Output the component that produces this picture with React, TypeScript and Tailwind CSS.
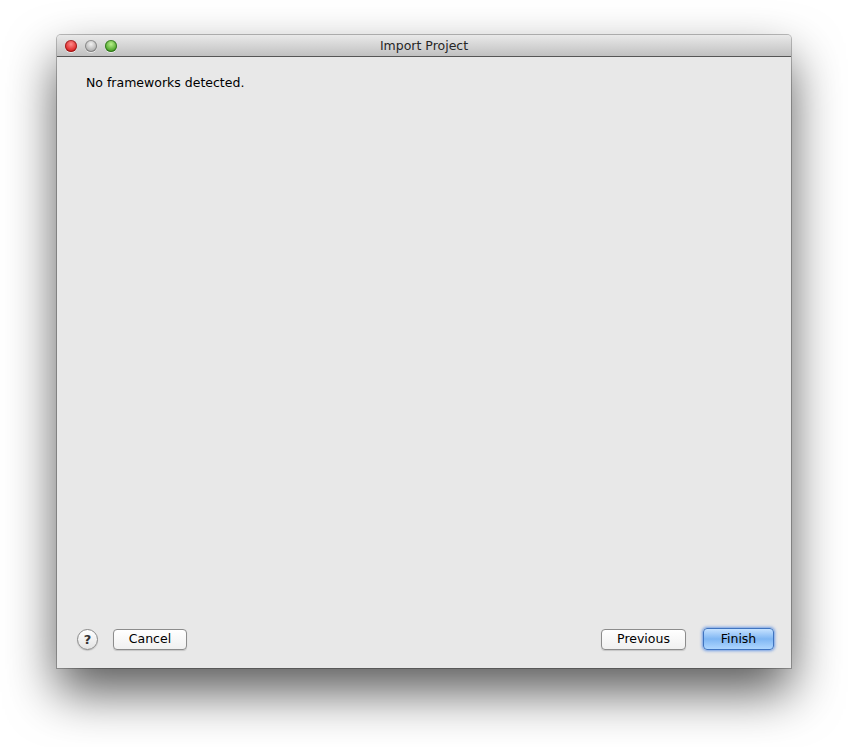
import React from "react";

function Light({ from, to, border }: { from: string; to: string; border: string }) {
  return (
    <div
      className="w-[12px] h-[12px] rounded-full"
      style={{
        background: `radial-gradient(circle at 50% 35%, ${from} 0%, ${to} 75%)`,
        boxShadow: `inset 0 0 0 1px ${border}, 0 1px 0 rgba(255,255,255,0.6)`,
      }}
    />
  );
}

export default function App() {
  const font = { fontFamily: '"DejaVu Sans", "Liberation Sans", sans-serif' };
  return (
    <div className="w-[848px] h-[747px] bg-white pl-[57px] pt-[35px]" style={font}>
      <div className="w-[734px] h-[633px] flex flex-col rounded-t-[4px] shadow-[0_24px_50px_rgba(0,0,0,0.65),0_0_0_1px_rgba(0,0,0,0.25)] bg-[#e8e8e8]">
        <div className="h-[22px] shrink-0 relative flex items-center rounded-t-[4px] bg-gradient-to-b from-[#e9e9e9] to-[#c1c1c1] border-b border-[#555]">
          <div className="flex items-center gap-[8px] pl-[8px]">
            <Light from="#ff8a8a" to="#d81818" border="rgba(120,20,20,0.6)" />
            <Light from="#f2f2f2" to="#a9a9a9" border="rgba(90,90,90,0.5)" />
            <Light from="#b8f08a" to="#3e9a1c" border="rgba(30,90,20,0.6)" />
          </div>
          <div className="absolute inset-0 pt-[2px] flex items-center justify-center text-[12.5px] text-[#262626] pointer-events-none">
            Import Project
          </div>
        </div>
        <div className="flex-1 flex flex-col">
          <div className="pl-[29px] pt-[17px] text-[12.5px] text-black">No frameworks detected.</div>
          <div className="flex-1" />
          <div className="flex items-center pl-[20px] pr-[17px] pb-[17px]">
            <div className="w-[21px] h-[21px] rounded-full border border-[#8a8a8a] bg-gradient-to-b from-white to-[#e3e3e3] flex items-center justify-center text-[13px] font-bold text-[#333] shadow-[0_1px_1px_rgba(0,0,0,0.15)]">
              ?
            </div>
            <button className="ml-[15px] w-[74px] h-[21px] rounded-[4px] border border-[#8c8c8c] bg-gradient-to-b from-white to-[#f0f0f0] text-[12.5px] text-black shadow-[0_1px_1px_rgba(0,0,0,0.15)] flex items-center justify-center">
              Cancel
            </button>
            <div className="flex-1" />
            <button className="w-[85px] h-[21px] mb-[1px] rounded-[4px] border border-[#8c8c8c] bg-gradient-to-b from-white to-[#f0f0f0] text-[12.5px] text-black shadow-[0_1px_1px_rgba(0,0,0,0.15)] flex items-center justify-center">
              Previous
            </button>
            <button className="ml-[17px] w-[71px] h-[22px] mb-[1px] rounded-[4px] border border-[#3f74c0] bg-gradient-to-b from-[#c6e2ff] via-[#7fb6f3] to-[#aed6ff] text-[12.5px] text-black shadow-[0_0_3px_1px_rgba(70,130,225,0.75)] flex items-center justify-center">
              Finish
            </button>
          </div>
        </div>
      </div>
    </div>
  );
}
